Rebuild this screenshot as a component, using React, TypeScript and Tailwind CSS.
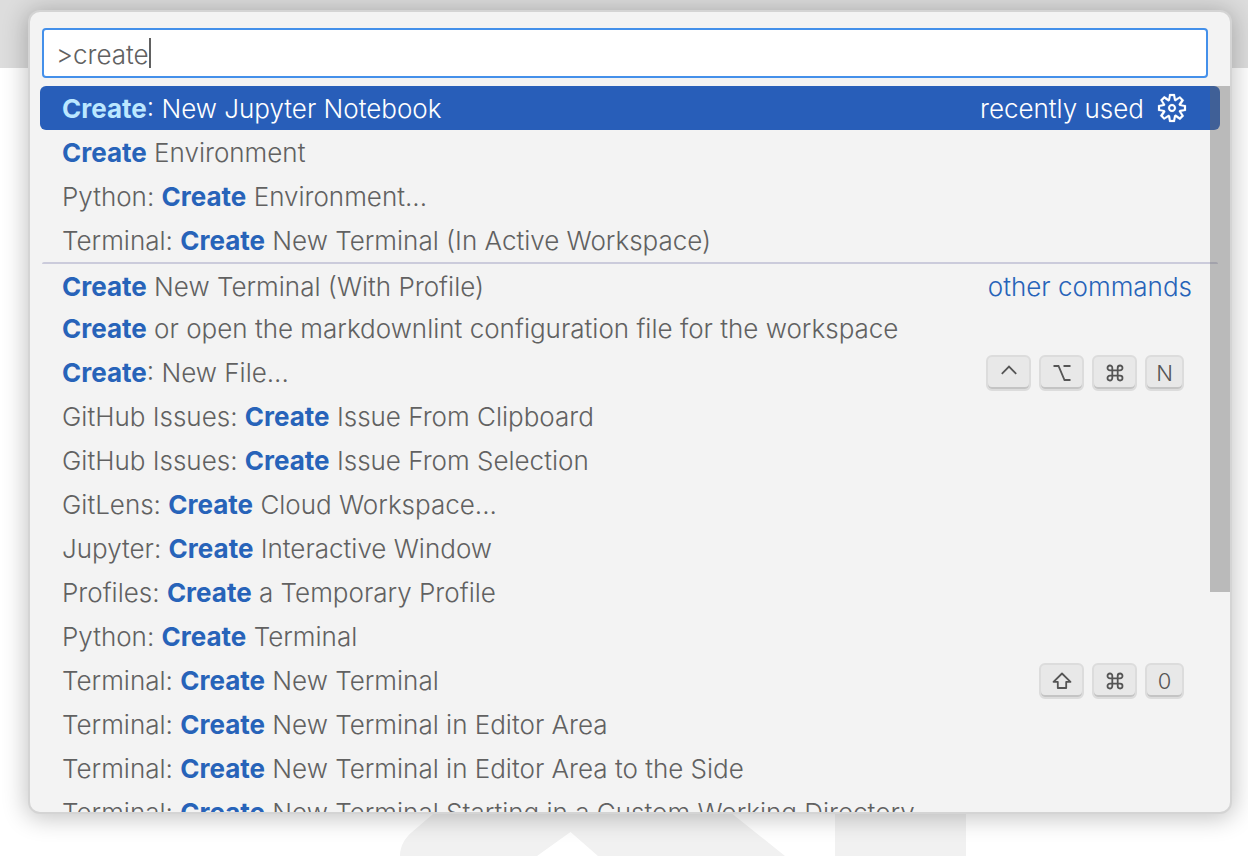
import { type ReactNode } from "react";
import { VscGear } from "react-icons/vsc";

type Command = {
  before?: string;
  match: string;
  after: string;
  group?: string;
  keys?: KeyName[];
};

type KeyName = "ctrl" | "option" | "command" | "shift" | "N" | "0";

const commands: Command[] = [
  { match: "Create", after: ": New Jupyter Notebook", group: "recently used" },
  { match: "Create", after: " Environment" },
  { before: "Python: ", match: "Create", after: " Environment..." },
  { before: "Terminal: ", match: "Create", after: " New Terminal (In Active Workspace)" },
  { match: "Create", after: " New Terminal (With Profile)", group: "other commands" },
  { match: "Create", after: " or open the markdownlint configuration file for the workspace" },
  { match: "Create", after: ": New File...", keys: ["ctrl", "option", "command", "N"] },
  { before: "GitHub Issues: ", match: "Create", after: " Issue From Clipboard" },
  { before: "GitHub Issues: ", match: "Create", after: " Issue From Selection" },
  { before: "GitLens: ", match: "Create", after: " Cloud Workspace..." },
  { before: "Jupyter: ", match: "Create", after: " Interactive Window" },
  { before: "Profiles: ", match: "Create", after: " a Temporary Profile" },
  { before: "Python: ", match: "Create", after: " Terminal" },
  { before: "Terminal: ", match: "Create", after: " New Terminal", keys: ["shift", "command", "0"] },
  { before: "Terminal: ", match: "Create", after: " New Terminal in Editor Area" },
  { before: "Terminal: ", match: "Create", after: " New Terminal in Editor Area to the Side" },
  { before: "Terminal: ", match: "Create", after: " New Terminal Starting in a Custom Working Directory" },
];

function Glyph({ children }: { children: ReactNode }) {
  return (
    <svg viewBox="0 0 20 20" className="size-5" fill="none" stroke="currentColor" strokeWidth="1.8" aria-hidden="true">
      {children}
    </svg>
  );
}

const glyphs: Record<KeyName, ReactNode> = {
  ctrl: (
    <Glyph>
      <path d="M2.8 10.8 L10 3.500 L17.2 10.8" />
    </Glyph>
  ),
  option: (
    <Glyph>
      <path d="M1.500 3 H6.500 L12.500 17 H18.500 M11.500 3 H18.500" />
    </Glyph>
  ),
  command: (
    <Glyph>
      <path d="M7.3 7.3 V4.9 A2.4 2.4 0 1 0 4.9 7.3 H15.1 A2.4 2.4 0 1 0 12.7 4.9 V15.1 A2.4 2.4 0 1 0 15.1 12.7 H4.9 A2.4 2.4 0 1 0 7.3 15.1 Z" />
    </Glyph>
  ),
  shift: (
    <Glyph>
      <path strokeLinejoin="round" d="M10 2.500 L18.500 10.800 H14.200 V17 H5.800 V10.800 H1.500 Z" />
    </Glyph>
  ),
  N: "N",
  "0": "0",
};

function Key({ name }: { name: KeyName }) {
  const wide = name.length > 1;
  return (
    <kbd
      aria-label={name}
      className={`flex h-9 items-center justify-center rounded-md border-2 border-[#dcdcdc] bg-[#e8e8e8] font-[Inter,sans-serif] text-[22px] leading-none text-[#555] shadow-[inset_0_-2px_0_#c4c4c4] ${
        wide ? "w-[45px]" : "w-[39px]"
      }`}
    >
      {glyphs[name]}
    </kbd>
  );
}

function CommandRow({ command, selected, divided }: { command: Command; selected: boolean; divided: boolean }) {
  return (
    <li
      role="option"
      aria-selected={selected}
      className={`flex h-11 justify-between whitespace-pre leading-[46px] ${
        selected ? "mx-2.5 rounded-md bg-[#285eb9] pl-[22px] pr-8 text-white" : "mx-3 rounded-xs pl-5"
      } ${divided ? "border-t-2 border-[#cbcbdb] pr-[26px]" : selected ? "" : "pr-[34px]"}`}
    >
      <span>
        {command.before}
        <strong className={`font-bold ${selected ? "text-[#bbe7ff]" : "text-[#2763b9]"}`}>{command.match}</strong>
        {command.after}
      </span>
      {command.group && (
        <span className={`flex gap-3 ${selected ? "" : "text-[#2763b9]"}`}>
          {command.group}
          {selected && (
            <button type="button" aria-label="Configure keybinding" className="flex items-center">
              <VscGear className="size-8" stroke="currentColor" strokeWidth="0.1" />
            </button>
          )}
        </span>
      )}
      {command.keys && (
        <span className="flex items-center gap-2 pt-0.5">
          {command.keys.map((key) => (
            <Key key={key} name={key} />
          ))}
        </span>
      )}
    </li>
  );
}

export default function App() {
  return (
    <div className="relative min-h-screen overflow-hidden bg-white font-[Inter,sans-serif] text-[26px] font-[350] text-[#616161]">
      <div className="absolute inset-x-0 top-0 h-[68px] bg-[#dddddd]" />
      <svg
        viewBox="0 0 566 60"
        className="absolute bottom-0 left-[400px] h-[60px] w-[566px]"
        fill="#f1f1f1"
        aria-hidden="true"
      >
        <path d="M0 60 C0 50 5 42 12 36 L54 0 H310 L385 60 H198 L170.500 36 L137 60 Z" />
        <path d="M435 0 H566 V60 H435 Z" />
      </svg>

      <main className="relative pb-10 pl-7 pr-4 pt-2.5">
        <div className="overflow-hidden rounded-xl border-2 border-[#d4d4d4] bg-[#f3f3f3] pt-4 shadow-[0_2px_24px_2px_rgba(0,0,0,0.24)]">
          <label className="ml-3 mr-[22px] flex h-[50px] cursor-text items-center rounded border-2 border-[#4490ea] bg-white pl-3">
            <input
              type="text"
              aria-label="Command"
              defaultValue=">create"
              className="field-sizing-content min-w-0 bg-transparent p-0 pt-0.5 caret-transparent outline-none"
            />
            <span className="h-[30px] w-0.5 bg-[#616161]" />
          </label>

          <div className="relative mt-2 max-h-[726px] overflow-hidden">
            <ul role="listbox" aria-label="Commands">
              {commands.map((command, index) => (
                <CommandRow
                  key={`${command.before ?? ""}${command.after}`}
                  command={command}
                  selected={index === 0}
                  divided={index > 0 && command.group !== undefined}
                />
              ))}
            </ul>
            <div className="absolute right-0 top-0 h-[506px] w-5 bg-[#646464]/40" />
          </div>
        </div>
      </main>
    </div>
  );
}
